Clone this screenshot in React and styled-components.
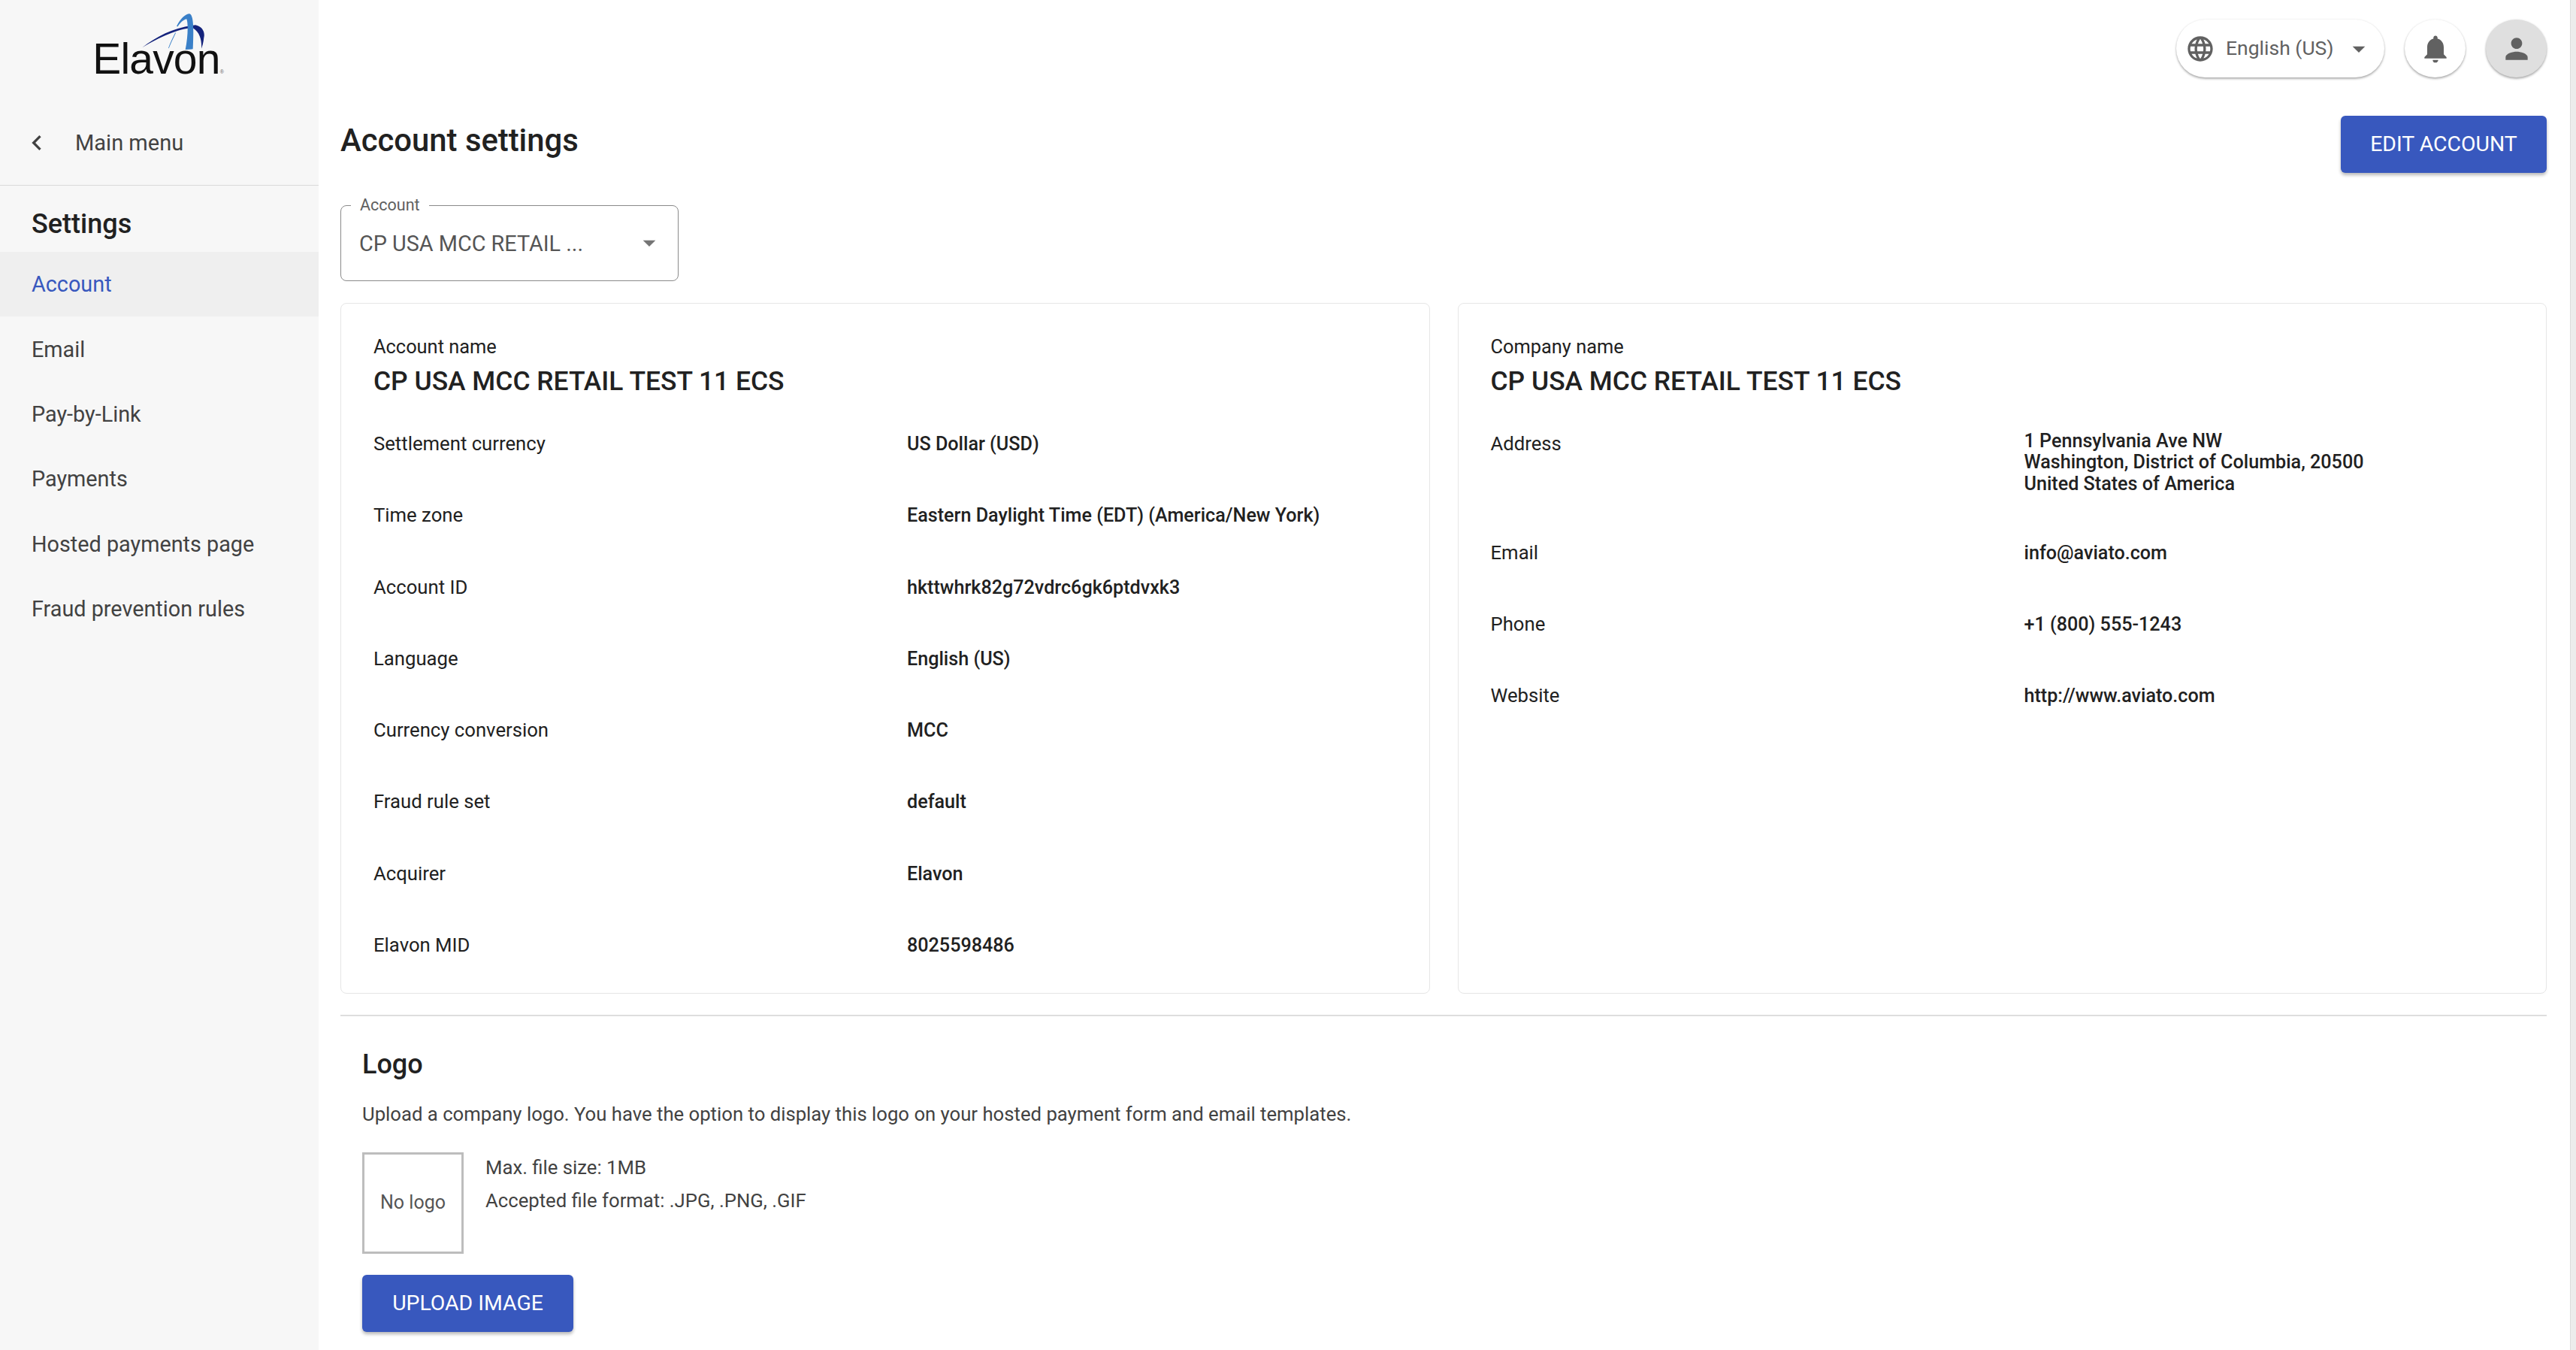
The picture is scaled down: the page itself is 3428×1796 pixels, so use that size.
import React from 'react';
import styled, { createGlobalStyle } from 'styled-components';
import { MdChevronLeft, MdLanguage, MdArrowDropDown, MdNotifications, MdPerson } from 'react-icons/md';

const GlobalStyle = createGlobalStyle`
    html, body {
        margin: 0;
        height: 100%;
        overflow: hidden;
        background: #fff;
        font-family: Roboto, "Liberation Sans", sans-serif;
        color: #212121;
    }
    * { box-sizing: border-box; }
`;

const Page = styled.div`
    display: flex;
    height: 1796px;
`;

const Sidebar = styled.aside`
    flex: 0 0 424px;
    background: #f7f7f7;
`;

const LogoBox = styled.div`
    position: relative;
    height: 130px;
    padding: 43px 3px 0 0;
    text-align: center;
`;

const LogoText = styled.span`
    font-family: "Liberation Sans", Arial, sans-serif;
    font-size: 57px;
    line-height: 70px;
    letter-spacing: -0.8px;
    color: #111;
    sup {
        font-size: 7px;
        letter-spacing: 0;
        vertical-align: baseline;
        color: #666;
    }
`;

const LogoMark = styled.svg`
    position: absolute;
    left: 80px;
    top: 0;
`;

const BackRow = styled.div`
    display: flex;
    align-items: center;
    height: 117px;
    padding: 4px 0 0 29px;
    gap: 31px;
    border-bottom: 1px solid #d9d9d9;
    font-size: 29px;
    color: #424242;
    svg { color: #424242; }
`;

const SideTitle = styled.h2`
    margin: 0;
    height: 88px;
    padding: 13px 42px 0;
    display: flex;
    align-items: center;
    font-size: 36px;
    font-weight: 500;
    color: #212121;
`;

const NavItem = styled.div`
    display: flex;
    align-items: center;
    height: 86.4px;
    padding: 0 42px;
    font-size: 28.8px;
    color: ${p => (p.$active ? '#3858be' : '#424242')};
    background: ${p => (p.$active ? '#efefef' : 'transparent')};
`;

const Main = styled.main`
    flex: 1;
    min-width: 0;
    padding: 26px 31px 0 29px;
`;

const TopBar = styled.div`
    display: flex;
    justify-content: flex-end;
    align-items: center;
    gap: 27px;
    height: 77px;
`;

const LangPill = styled.div`
    display: flex;
    align-items: center;
    width: 277px;
    height: 77px;
    padding: 0 14px 0 12px;
    border-radius: 39px;
    background: #fff;
    color: #616161;
    font-size: 26.5px;
    box-shadow: 0 2px 3px rgba(0, 0, 0, 0.3), 0 0 3px rgba(0, 0, 0, 0.08);
    span { flex: 1; padding: 0 0 3px 14px; }
`;

const RoundButton = styled.div`
    display: flex;
    align-items: center;
    justify-content: center;
    width: 81px;
    height: 77px;
    border-radius: 50%;
    color: #616161;
    background: ${p => (p.$grey ? '#dfdfdf' : '#fff')};
    box-shadow: 0 2px 3px rgba(0, 0, 0, 0.3), 0 0 3px rgba(0, 0, 0, 0.08);
`;

const TitleRow = styled.div`
    display: flex;
    justify-content: space-between;
    align-items: center;
    height: 76px;
    margin-top: 51px;
`;

const PageTitle = styled.h1`
    margin: 0 0 11px;
    font-size: 41.8px;
    font-weight: 500;
    color: #212121;
`;

const PrimaryButton = styled.button`
    height: 76px;
    width: ${p => p.$width}px;
    padding: 0 0 2px;
    border: 0;
    border-radius: 6px;
    background: #3858be;
    color: #fff;
    font-family: inherit;
    font-size: 28.4px;
    font-weight: 400;
    box-shadow: 0 3px 4px rgba(0, 0, 0, 0.28);
`;

const SelectBox = styled.div`
    position: relative;
    display: flex;
    align-items: flex-start;
    justify-content: space-between;
    width: 450px;
    height: 101px;
    margin-top: 43px;
    padding: 33px 18px 0 24px;
    border: 1.5px solid #8a8a8a;
    border-radius: 8px;
    font-size: 28.8px;
    color: #555;
`;

const SelectLabel = styled.label`
    position: absolute;
    left: 13px;
    top: -14px;
    padding: 0 12px;
    background: #fff;
    font-size: 21.5px;
    line-height: 26px;
    color: #616161;
`;

const SelectArrow = styled(MdArrowDropDown)`
    margin-top: -4px;
    color: #757575;
`;

const CardGrid = styled.div`
    display: grid;
    grid-template-columns: 1fr 1fr;
    gap: 37px;
    margin-top: 29px;
`;

const Card = styled.section`
    height: 919px;
    padding: 42px 43px 0;
    border: 1.5px solid #e6e6e6;
    border-radius: 8px;
`;

const CardLabel = styled.div`
    font-size: 25.4px;
    line-height: 30px;
    color: #212121;
`;

const CardTitle = styled.div`
    margin-top: 9px;
    font-size: 35.4px;
    line-height: 44px;
    font-weight: 500;
    color: #212121;
`;

const Rows = styled.dl`
    margin: 47px 0 0;
`;

const Row = styled.div`
    display: grid;
    grid-template-columns: 710px 1fr;
    margin-bottom: 66.3px;
    line-height: 29px;
`;

const RowLabel = styled.dt`
    font-size: 25.7px;
    color: #212121;
`;

const RowValue = styled.dd`
    margin: ${p => (p.$multiline ? '-3px 0 -4px' : '0')};
    font-size: 25.15px;
    line-height: ${p => (p.$multiline ? '28.4px' : '29px')};
    font-weight: 500;
    color: #212121;
`;

const Divider = styled.hr`
    margin: 28px 0 0;
    border: 0;
    border-top: 2px solid #dedede;
`;

const LogoSection = styled.section`
    padding: 0 29px;
`;

const SectionTitle = styled.h3`
    margin: 46px 0 0;
    font-size: 36px;
    line-height: 36px;
    font-weight: 500;
    color: #212121;
`;

const Description = styled.p`
    margin: 33px 0 0;
    font-size: 25.7px;
    line-height: 30px;
    color: #424242;
`;

const UploadRow = styled.div`
    display: flex;
    gap: 29px;
    margin-top: 36px;
`;

const LogoPlaceholder = styled.div`
    display: flex;
    align-items: center;
    justify-content: center;
    width: 135px;
    height: 135px;
    padding-bottom: 3px;
    border: 3px solid #bdbdbd;
    font-size: 25px;
    color: #555;
`;

const UploadHints = styled.div`
    margin-top: -2px;
    font-size: 25.7px;
    line-height: 44px;
    color: #424242;
`;

const UploadButton = styled(PrimaryButton)`
    display: block;
    margin-top: 28px;
`;

const ScrollTrack = styled.div`
    flex: 0 0 8px;
    background: #ececec;
    border-left: 1px solid #dcdcdc;
`;

const accountRows = [
    ['Settlement currency', 'US Dollar (USD)'],
    ['Time zone', 'Eastern Daylight Time (EDT) (America/New York)'],
    ['Account ID', 'hkttwhrk82g72vdrc6gk6ptdvxk3'],
    ['Language', 'English (US)'],
    ['Currency conversion', 'MCC'],
    ['Fraud rule set', 'default'],
    ['Acquirer', 'Elavon'],
    ['Elavon MID', '8025598486'],
];

const companyRows = [
    ['Address', <>1 Pennsylvania Ave NW<br />Washington, District of Columbia, 20500<br />United States of America</>, true],
    ['Email', 'info@aviato.com'],
    ['Phone', '+1 (800) 555-1243'],
    ['Website', 'http://www.aviato.com'],
];

const navItems = ['Account', 'Email', 'Pay-by-Link', 'Payments', 'Hosted payments page', 'Fraud prevention rules'];

const DetailCard = ({ label, title, rows }) => (
    <Card>
        <CardLabel>{label}</CardLabel>
        <CardTitle>{title}</CardTitle>
        <Rows>
            {rows.map(([name, value, multiline]) => (
                <Row key={name}>
                    <RowLabel>{name}</RowLabel>
                    <RowValue $multiline={multiline}>{value}</RowValue>
                </Row>
            ))}
        </Rows>
    </Card>
);

const App = () => {
    return (
        <Page>
            <GlobalStyle />
            <Sidebar>
                <LogoBox>
                    <LogoText>Elavon<sup>®</sup></LogoText>
                    <LogoMark width="250" height="120" viewBox="0 0 750 360">
                        <path d="M328 190 C385 145 455 110 540 100 C565 105 580 125 574 150 C572 170 568 185 564 194 C566 165 560 130 530 112 C470 114 395 150 328 190 Z" fill="#14237c" />
                        <path d="M465 105 C480 75 500 55 517 55 C532 62 534 100 530 196 L500 198 C510 150 512 95 505 76 C490 80 478 92 470 106 Z" fill="#3a80c8" />
                        <path d="M432 192 C440 170 450 150 460 130 L462 131 C452 152 442 172 434 193 Z" fill="#3a80c8" />
                    </LogoMark>
                </LogoBox>
                <BackRow><MdChevronLeft size={40} /><span>Main menu</span></BackRow>
                <SideTitle>Settings</SideTitle>
                {navItems.map((item, i) => (
                    <NavItem key={item} $active={i === 0}>{item}</NavItem>
                ))}
            </Sidebar>
            <Main>
                <TopBar>
                    <LangPill><MdLanguage size={40} /><span>English (US)</span><MdArrowDropDown size={40} /></LangPill>
                    <RoundButton><MdNotifications size={44} /></RoundButton>
                    <RoundButton $grey><MdPerson size={44} /></RoundButton>
                </TopBar>
                <TitleRow>
                    <PageTitle>Account settings</PageTitle>
                    <PrimaryButton $width={274}>EDIT ACCOUNT</PrimaryButton>
                </TitleRow>
                <SelectBox>
                    <SelectLabel>Account</SelectLabel>
                    <span>CP USA MCC RETAIL ...</span>
                    <SelectArrow size={40} />
                </SelectBox>
                <CardGrid>
                    <DetailCard label="Account name" title="CP USA MCC RETAIL TEST 11 ECS" rows={accountRows} />
                    <DetailCard label="Company name" title="CP USA MCC RETAIL TEST 11 ECS" rows={companyRows} />
                </CardGrid>
                <Divider />
                <LogoSection>
                    <SectionTitle>Logo</SectionTitle>
                    <Description>Upload a company logo. You have the option to display this logo on your hosted payment form and email templates.</Description>
                    <UploadRow>
                        <LogoPlaceholder>No logo</LogoPlaceholder>
                        <UploadHints>Max. file size: 1MB<br />Accepted file format: .JPG, .PNG, .GIF</UploadHints>
                    </UploadRow>
                    <UploadButton $width={281}>UPLOAD IMAGE</UploadButton>
                </LogoSection>
            </Main>
            <ScrollTrack />
        </Page>
    );
};

export default App;
